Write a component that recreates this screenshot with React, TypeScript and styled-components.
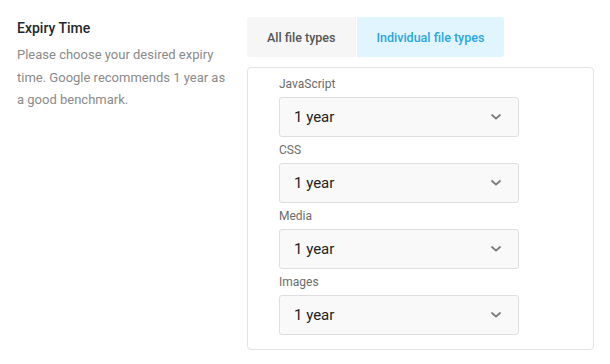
import {useState} from "react";
import styled, {createGlobalStyle} from "styled-components";

const GlobalStyle = createGlobalStyle`
    * {
        box-sizing: border-box;
    }

    body {
        margin: 0;
        background: #fff;
        font-family: Roboto, "Liberation Sans", sans-serif;
    }
`

const fileTypes = ['JavaScript', 'CSS', 'Media', 'Images']

export default function App() {
    const [mode, setMode] = useState('individual');

    return <Page>
        <GlobalStyle/>
        <Intro>
            <Title>Expiry Time</Title>
            <Description>
                Please choose your desired expiry time. Google recommends 1 year as a good benchmark.
            </Description>
        </Intro>
        <Settings>
            <Tabs>
                <Tab $active={mode === 'all'} onClick={() => setMode('all')}>All file types</Tab>
                <Tab $active={mode === 'individual'} onClick={() => setMode('individual')}>Individual file types</Tab>
            </Tabs>
            <Panel>
                {fileTypes.map(t =>
                    <Field key={t}>
                        <Label>{t}</Label>
                        <Select>
                            <span>1 year</span>
                            <svg width="10" height="6" viewBox="0 0 10 6">
                                <path d="M1 1l4 3.6L9 1" fill="none" stroke="#7a7a7a" strokeWidth="1.8"
                                      strokeLinecap="round" strokeLinejoin="round"/>
                            </svg>
                        </Select>
                    </Field>)}
            </Panel>
        </Settings>
    </Page>
}

const Page = styled.div`
    display: flex;
    width: 610px;
    height: 364px;
    padding: 17px 0 0 17px;
    gap: 18px;
`

const Intro = styled.div`
    width: 212px;
    padding-top: 1px;
`

const Title = styled.h3`
    margin: 0 0 6px;
    font-size: 14px;
    line-height: 20px;
    font-weight: 500;
    color: #23282d;
`

const Description = styled.p`
    margin: 0;
    font-size: 13px;
    line-height: 22.5px;
    color: #8a8a8a;
`

const Settings = styled.div`
    display: flex;
    flex-direction: column;
    gap: 10px;
    width: 347px;
`

const Tabs = styled.div`
    display: flex;
    gap: 1px;
`

const Tab = styled.button<{ $active: boolean }>`
    height: 40px;
    padding: 0 20px;
    border: none;
    font-family: inherit;
    font-size: 12.5px;
    font-weight: 500;
    cursor: pointer;
    background: ${p => p.$active ? '#e1f5fe' : '#f6f6f6'};
    color: ${p => p.$active ? '#2aa5e3' : '#555'};

    &:first-child {
        border-radius: 3px 0 0 3px;
    }

    &:last-child {
        border-radius: 0 3px 3px 0;
    }
`

const Panel = styled.div`
    display: flex;
    flex-direction: column;
    gap: 5px;
    padding: 8px 0 14px 31px;
    border: 1px solid #e3e3e3;
    border-radius: 4px;
`

const Field = styled.div`
    display: flex;
    flex-direction: column;
    gap: 5px;
`

const Label = styled.label`
    font-size: 12px;
    line-height: 16px;
    color: #6b6b6b;
`

const Select = styled.div`
    display: flex;
    align-items: center;
    justify-content: space-between;
    width: 240px;
    height: 40px;
    padding: 0 17px 0 14px;
    background: #f9f9f9;
    border: 1px solid #dedede;
    border-radius: 3px;
    font-size: 15px;
    color: #222;
    cursor: pointer;
`
